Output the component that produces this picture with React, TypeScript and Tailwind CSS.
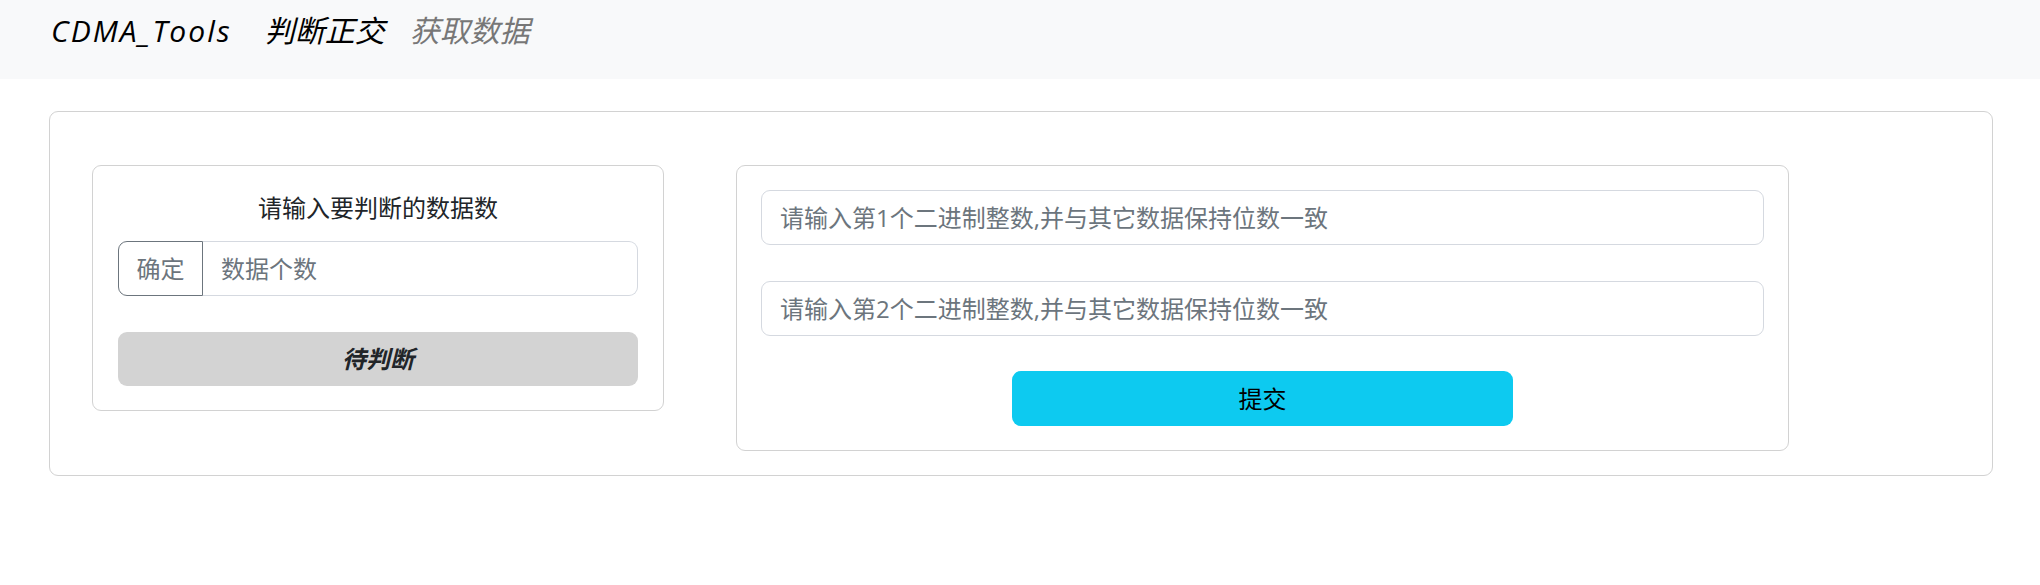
import React from 'react';

const NavBar = () => {
  return (
    <nav className="h-[79px] bg-[#f8f9fa] flex items-start pt-[8px] pl-[51px]">
      <span className="text-[30px] leading-[45px] italic tracking-[2px] text-[#000] mr-[33px]">CDMA_Tools</span>
      <a className="text-[30px] leading-[45px] italic text-[#000] mr-[25px]">判断正交</a>
      <a className="text-[30px] leading-[45px] italic text-[#777777]">获取数据</a>
    </nav>
  );
};

const CountCard = () => {
  return (
    <div className="w-[572px] self-start border border-[#d2d2d2] rounded-[9px] px-[25px] pt-[24px] pb-[24px]">
      <div className="text-center text-[24px] leading-[36px] text-[#212529]">请输入要判断的数据数</div>
      <div className="mt-[15px] flex h-[55px]">
        <button className="w-[85px] shrink-0 border border-[#6c757d] rounded-l-[9px] text-[24px] text-[#6c757d]">
          确定
        </button>
        <input
          className="flex-1 min-w-0 border border-l-0 border-[#d5d9e0] rounded-r-[9px] pl-[18px] text-[24px] outline-none placeholder:text-[#6c757d]"
          placeholder="数据个数"
        />
      </div>
      <div className="mt-[36px] h-[54px] rounded-[9px] bg-[#d3d3d3] flex items-center justify-center">
        <span className="text-[24px] font-bold italic text-[#212529]">待判断</span>
      </div>
    </div>
  );
};

const BinaryCard = () => {
  const rows = [1, 2];
  return (
    <div className="w-[1053px] ml-[72px] self-start border border-[#d2d2d2] rounded-[9px] px-[24px] pt-[24px] pb-[24px] flex flex-col">
      {rows.map((n) => (
        <input
          key={n}
          className="h-[55px] mb-[36px] border border-[#d5d9e0] rounded-[9px] px-[18px] text-[24px] outline-none placeholder:text-[#6c757d]"
          placeholder={`请输入第${n}个二进制整数,并与其它数据保持位数一致`}
        />
      ))}
      <button className="self-center -mt-[1px] w-[501px] h-[55px] rounded-[9px] bg-[#0dcaf0] text-[24px] text-[#000]">
        提交
      </button>
    </div>
  );
};

const App = () => {
  return (
    <div className="min-h-[585px] bg-white font-['Open_Sans','Noto_Sans_CJK_SC',sans-serif]">
      <NavBar />
      <div className="mt-[32px] ml-[49px] mr-[47px] border border-[#d2d2d2] rounded-[9px] pt-[53px] pb-[24px] pl-[42px] flex">
        <CountCard />
        <BinaryCard />
      </div>
    </div>
  );
};

export default App;
